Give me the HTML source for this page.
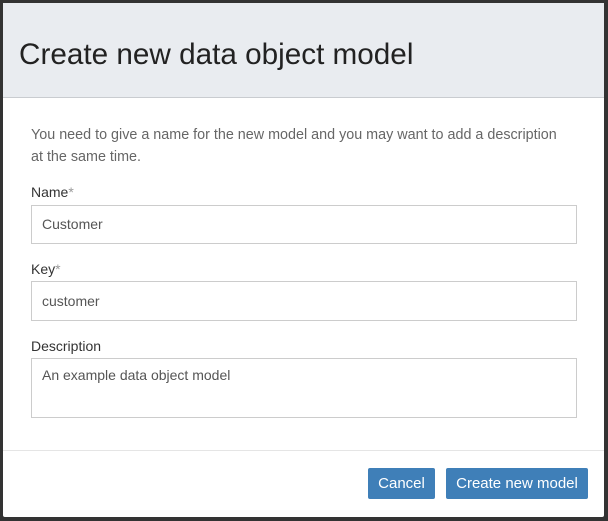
<!DOCTYPE html>
<html><head><style>
body{margin:0;width:608px;height:521px;background:#333;font-family:"Liberation Sans",sans-serif;position:relative;overflow:hidden}
.d{position:absolute;left:3px;top:3px;width:601px;height:514px;background:#fff;border-radius:2px}
.h{position:absolute;left:0;top:0;width:601px;height:94px;background:#e9ecf0;border-bottom:1px solid #c9ccd0}
.h div{position:absolute;left:16px;top:35px;font-size:29.7px;color:#222;line-height:34px}
.t{position:absolute;font-size:14px;color:#333}
.p{color:#666;line-height:22px;font-size:14.35px}
.in{position:absolute;left:28px;width:546px;border:1px solid #ccc;font-size:14px;color:#555;box-sizing:border-box;padding-left:10px}
.f{position:absolute;left:0;top:447px;width:601px;border-top:1px solid #e5e5e5}
.b{position:absolute;top:465px;height:31px;background:#3f7fb8;color:#fff;font-size:15px;line-height:31px;text-align:center;border-radius:2px}
.s{color:#999}
</style></head><body>
<div class="d">
<div class="h"><div>Create new data object model</div></div>
<div class="t p" style="left:28px;top:121px">You need to give a name for the new model and you may want to add a description<br>at the same time.</div>
<div class="t" style="left:28px;top:181px">Name<span class="s">*</span></div>
<div class="in" style="top:202px;height:39px;line-height:37px">Customer</div>
<div class="t" style="left:28px;top:258px">Key<span class="s">*</span></div>
<div class="in" style="top:278px;height:40px;line-height:38px">customer</div>
<div class="t" style="left:28px;top:335px">Description</div>
<div class="in" style="top:355px;height:60px;padding-top:8px">An example data object model</div>
<div class="f"></div>
<div class="b" style="left:365px;width:67px">Cancel</div>
<div class="b" style="left:443px;width:142px">Create new model</div>
</div>
</body></html>
